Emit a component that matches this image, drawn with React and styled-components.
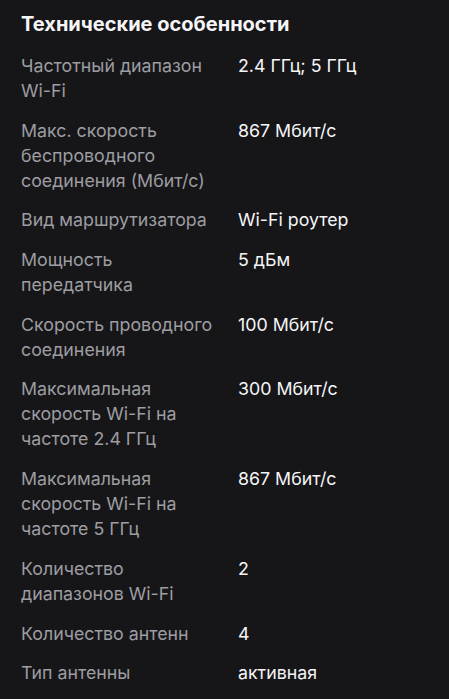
import React from "react";
import styled, { createGlobalStyle } from "styled-components";

const Global = createGlobalStyle`
  html, body { margin: 0; padding: 0; background: #161618; }
  body { font-family: Inter, "Noto Sans", sans-serif; -webkit-font-smoothing: antialiased; }
`;

const Page = styled.div`
  background: #161618;
  min-height: 699px;
  padding: 9px 21px 0 21px;
  box-sizing: border-box;
`;

const Title = styled.h2`
  margin: 0 0 14px 0;
  font-size: 20px;
  line-height: 30px;
  font-weight: 700;
  color: #f5f5f7;
`;

const Specs = styled.dl`
  margin: 0;
  display: grid;
  grid-template-columns: 200px 1fr;
  column-gap: 17px;
  row-gap: 14.7px;
`;

const Label = styled.dt`
  margin: 0;
  font-size: 17.8px;
  line-height: 25px;
  color: #9d9da2;
`;

const Value = styled.dd`
  margin: 0;
  font-size: 17.8px;
  line-height: 25px;
  color: #f5f5f7;
`;

const specs = [
  ["Частотный диапазон Wi-Fi", "2.4 ГГц; 5 ГГц"],
  ["Макс. скорость беспроводного соединения (Мбит/с)", "867 Мбит/с"],
  ["Вид маршрутизатора", "Wi-Fi роутер"],
  ["Мощность передатчика", "5 дБм"],
  ["Скорость проводного соединения", "100 Мбит/с"],
  ["Максимальная скорость Wi-Fi на частоте 2.4 ГГц", "300 Мбит/с"],
  ["Максимальная скорость Wi-Fi на частоте 5 ГГц", "867 Мбит/с"],
  ["Количество диапазонов Wi-Fi", "2"],
  ["Количество антенн", "4"],
  ["Тип антенны", "активная"],
];

export default function App() {
  return (
    <Page>
      <Global />
      <Title>Технические особенности</Title>
      <Specs>
        {specs.map(([l, v]) => (
          <React.Fragment key={l}>
            <Label>{l}</Label>
            <Value>{v}</Value>
          </React.Fragment>
        ))}
      </Specs>
    </Page>
  );
}
